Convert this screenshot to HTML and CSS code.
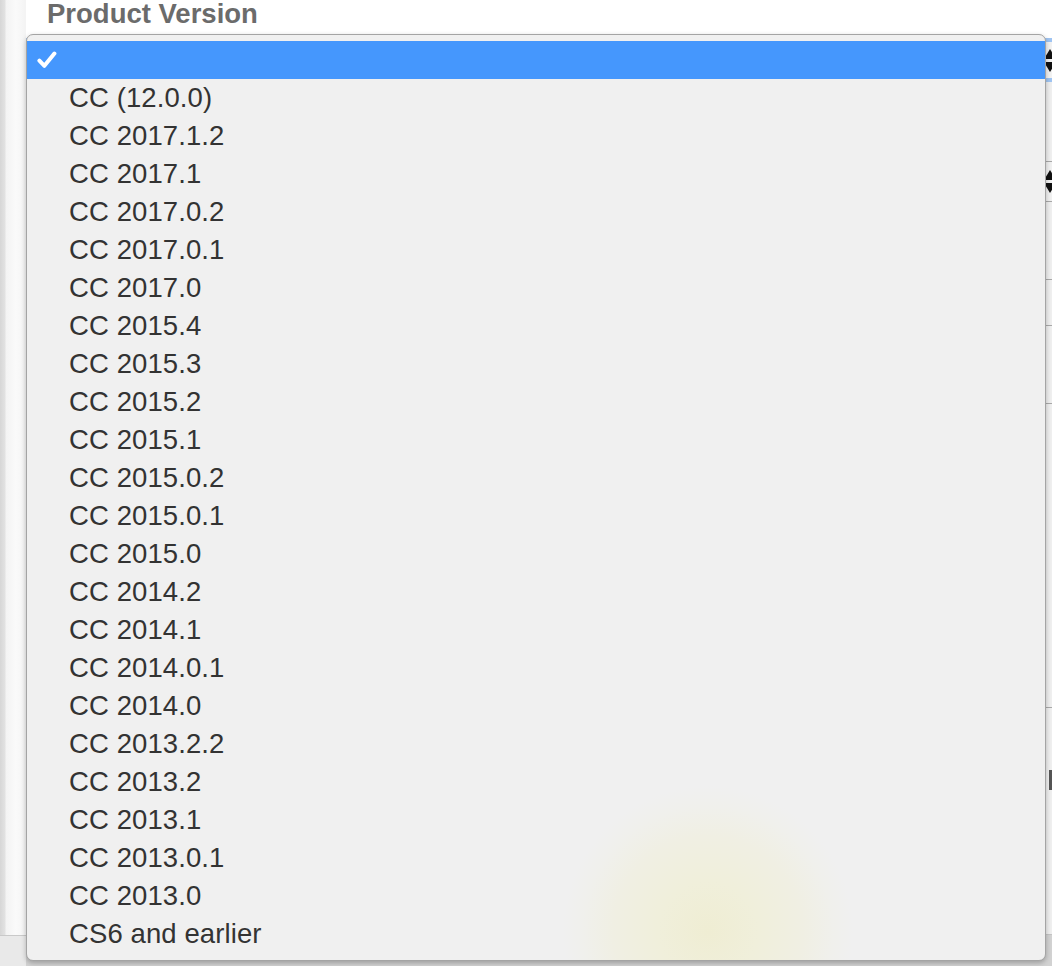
FILE: index.html
```html
<!DOCTYPE html>
<html lang="en">
<head>
<meta charset="utf-8">
<title>Product Version</title>
<link rel="stylesheet" href="styles.css">
</head>
<body>
<div class="screen">
  <aside class="sidebar">
    <div class="sidebar-top"></div>
    <div class="sidebar-bottom"></div>
  </aside>
  <main class="content">
    <h2 class="label">Product Version</h2>
    <div class="select focused"><span class="stepper"><span class="up"></span><span class="down"></span></span></div>
    <div class="row gap80"></div>
    <div class="select plain"><span class="stepper"><span class="up"></span><span class="down"></span></span></div>
    <div class="row h78"></div>
    <div class="row h46"></div>
    <div class="row h78"></div>
    <div class="row h304"></div>
    <div class="row h227"><span class="mark"></span></div>
    <div class="footer"></div>
  </main>

  <div class="menu" role="listbox">
    <div class="item selected"><span class="check"><svg width="20" height="18" viewBox="0 0 20 18"><path d="M2.4 9.6 L7.4 14.8 L17.4 2.6" fill="none" stroke="#fff" stroke-width="4" stroke-linecap="round" stroke-linejoin="round"/></svg></span><span class="text"></span></div>
    <div class="item"><span class="check"></span><span class="text">CC (12.0.0)</span></div>
    <div class="item"><span class="check"></span><span class="text">CC 2017.1.2</span></div>
    <div class="item"><span class="check"></span><span class="text">CC 2017.1</span></div>
    <div class="item"><span class="check"></span><span class="text">CC 2017.0.2</span></div>
    <div class="item"><span class="check"></span><span class="text">CC 2017.0.1</span></div>
    <div class="item"><span class="check"></span><span class="text">CC 2017.0</span></div>
    <div class="item"><span class="check"></span><span class="text">CC 2015.4</span></div>
    <div class="item"><span class="check"></span><span class="text">CC 2015.3</span></div>
    <div class="item"><span class="check"></span><span class="text">CC 2015.2</span></div>
    <div class="item"><span class="check"></span><span class="text">CC 2015.1</span></div>
    <div class="item"><span class="check"></span><span class="text">CC 2015.0.2</span></div>
    <div class="item"><span class="check"></span><span class="text">CC 2015.0.1</span></div>
    <div class="item"><span class="check"></span><span class="text">CC 2015.0</span></div>
    <div class="item"><span class="check"></span><span class="text">CC 2014.2</span></div>
    <div class="item"><span class="check"></span><span class="text">CC 2014.1</span></div>
    <div class="item"><span class="check"></span><span class="text">CC 2014.0.1</span></div>
    <div class="item"><span class="check"></span><span class="text">CC 2014.0</span></div>
    <div class="item"><span class="check"></span><span class="text">CC 2013.2.2</span></div>
    <div class="item"><span class="check"></span><span class="text">CC 2013.2</span></div>
    <div class="item"><span class="check"></span><span class="text">CC 2013.1</span></div>
    <div class="item"><span class="check"></span><span class="text">CC 2013.0.1</span></div>
    <div class="item"><span class="check"></span><span class="text">CC 2013.0</span></div>
    <div class="item"><span class="check"></span><span class="text">CS6 and earlier</span></div>
  </div>
</div>
</body>
</html>
```

FILE: styles.css
```css
html, body {
  margin: 0;
  padding: 0;
  background: #ffffff;
}

body {
  font-family: "Liberation Sans", Arial, Helvetica, sans-serif;
  overflow: hidden;
}

.screen {
  position: relative;
  width: 1052px;
  height: 966px;
  display: flex;
  overflow: hidden;
  background: #ffffff;
}

/* left strip */
.sidebar {
  width: 26px;
  flex: none;
  display: flex;
  flex-direction: column;
}
.sidebar-top {
  flex: 1;
  background: linear-gradient(to right, #d6d6d6 0, #e2e2e2 5px, #f3f3f3 6px, #fafafa 16px, #f4f4f4 25px);
  border-bottom: 1px solid #c9c9c9;
}
.sidebar-bottom {
  height: 30px;
  background: #e9e9e9;
}

/* page content behind the menu */
.content {
  flex: 1;
  display: flex;
  flex-direction: column;
  min-width: 0;
}
.label {
  margin: 0 0 0 21px;
  height: 34px;
  font-size: 27.5px;
  line-height: 28px;
  font-weight: bold;
  color: #6b6b6b;
  white-space: nowrap;
}
.select {
  position: relative;
  display: flex;
  justify-content: flex-end;
  align-items: center;
}
.select.focused {
  margin-top: 4px;
  height: 36px;
  background: #f2f2f2;
  border-top: 4px solid #9fc4f2;
  border-bottom: 4px solid #9fc4f2;
}
.select.plain {
  height: 39px;
  background: #f0f0f0;
  border-top: 1px solid #a8a8a8;
  border-bottom: 1px solid #a8a8a8;
}
.stepper {
  display: flex;
  flex-direction: column;
  gap: 3px;
  margin-right: -4px;
}
.stepper .up {
  width: 0;
  height: 0;
  border-left: 6px solid transparent;
  border-right: 6px solid transparent;
  border-bottom: 10px solid #111;
}
.stepper .down {
  width: 0;
  height: 0;
  border-left: 6px solid transparent;
  border-right: 6px solid transparent;
  border-top: 10px solid #111;
}
.row {
  background: #efefef;
  border-bottom: 1px solid #a9a9a9;
  position: relative;
  display: flex;
  justify-content: flex-end;
  align-items: center;
}
.gap80 { height: 79px; border-bottom: 0; }
.h78 { height: 77px; }
.h46 { height: 45px; }
.h304 { height: 303px; }
.h227 { height: 226px; border-bottom-color: #c4c4c4; }
.mark {
  width: 3px;
  height: 20px;
  background: #555;
  margin-top: -82px;
}
.footer {
  flex: 1;
  background: #d2d2d2;
}

/* pop-up menu */
.menu {
  position: absolute;
  left: 26px;
  top: 34px;
  width: 1018px;
  height: 919px;
  padding: 6px 0 0;
  box-sizing: content-box;
  border: 1px solid #a4a4a4;
  border-radius: 7px;
  background-color: #f0f0f0;
  background-image: radial-gradient(circle at 681px 896px, #efedd3 0, #f0efdb 50px, #f0efe3 95px, #f0f0ec 125px, rgba(240,240,240,0) 145px);
  box-shadow: 0 2px 5px rgba(0, 0, 0, 0.25);
  overflow: hidden;
  display: flex;
  flex-direction: column;
}
.item {
  height: 38px;
  flex: none;
  display: flex;
  align-items: center;
  font-size: 27.5px;
  line-height: 38px;
  color: #333333;
  white-space: nowrap;
}
.item.selected {
  background: #4597fd;
  color: #fff;
}
.check {
  width: 42px;
  flex: none;
  display: flex;
  align-items: center;
  padding-left: 10px;
  box-sizing: border-box;
}
.check svg {
  display: block;
}
.text {
  letter-spacing: 0.1px;
}
```
